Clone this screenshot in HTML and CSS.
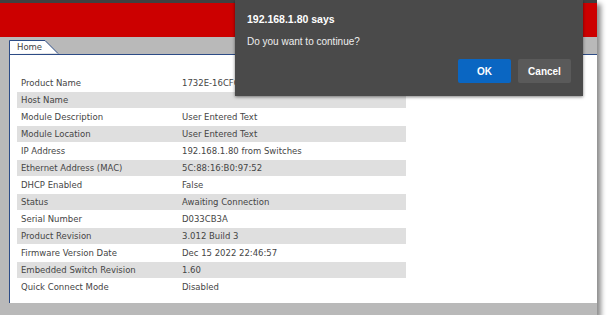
FILE: index.html
```html
<!DOCTYPE html>
<html>

<head>
  <title>Home</title>
  <link rel="stylesheet" href="styles.css">
</head>

<body>
  <div class="shot">
    <div class="topline"></div>
    <div class="header"></div>
    <div class="tabbar">
      <div class="tab">
        <svg class="tab-shape" width="50" height="14" viewBox="0 0 50 14">
          <path d="M0.5 14 V0.5 H36 L49 13.5" fill="#fff" stroke="#2d4c86" stroke-width="1" />
        </svg>
        <span>Home</span>
      </div>
    </div>
    <div class="panel">
      <table class="info">
        <tr><td>Product Name</td><td>1732E-16CFGM12P5QCWR</td></tr>
        <tr><td>Host Name</td><td></td></tr>
        <tr><td>Module Description</td><td>User Entered Text</td></tr>
        <tr><td>Module Location</td><td>User Entered Text</td></tr>
        <tr><td>IP Address</td><td>192.168.1.80 from Switches</td></tr>
        <tr><td>Ethernet Address (MAC)</td><td>5C:88:16:B0:97:52</td></tr>
        <tr><td>DHCP Enabled</td><td>False</td></tr>
        <tr><td>Status</td><td>Awaiting Connection</td></tr>
        <tr><td>Serial Number</td><td>D033CB3A</td></tr>
        <tr><td>Product Revision</td><td>3.012 Build 3</td></tr>
        <tr><td>Firmware Version Date</td><td>Dec 15 2022 22:46:57</td></tr>
        <tr><td>Embedded Switch Revision</td><td>1.60</td></tr>
        <tr><td>Quick Connect Mode</td><td>Disabled</td></tr>
      </table>
    </div>

    <div class="dialog">
      <div class="dialog-title">192.168.1.80 says</div>
      <div class="dialog-msg">Do you want to continue?</div>
      <div class="dialog-buttons">
        <button class="btn btn-ok">OK</button>
        <button class="btn btn-cancel">Cancel</button>
      </div>
    </div>
  </div>
</body>

</html>
```

FILE: styles.css
```css
* {
  margin: 0;
  padding: 0;
  box-sizing: border-box;
}

body {
  background-color: #fff;
  font-family: "DejaVu Sans", Verdana, sans-serif;
}

.shot {
  position: relative;
  width: 597px;
  height: 315px;
  background-color: #b9b9b9;
  box-shadow: 4px 4px 5px rgba(0, 0, 0, 0.45);
  display: flex;
  flex-direction: column;
  overflow: visible;
}

.topline {
  height: 3px;
  background-color: #404040;
}

.header {
  height: 34px;
  background-color: #cc0000;
}

.tabbar {
  height: 17px;
  padding-left: 9px;
  display: flex;
  align-items: flex-end;
}

.tab {
  position: relative;
  width: 50px;
  height: 13px;
}

.tab-shape {
  position: absolute;
  left: 0;
  top: -1px;
}

.tab span {
  position: relative;
  display: block;
  padding-left: 8px;
  font-size: 8.5px;
  line-height: 13px;
  color: #444;
}

.panel {
  margin-left: 9px;
  height: 249px;
  background-color: #fff;
  border-top: 1px solid #2d4c86;
  border-left: 1px solid #2d4c86;
  padding: 19px 0 0 7px;
}

.info {
  width: 389px;
  border-collapse: separate;
  border-spacing: 0 1px;
  font-size: 8.5px;
  color: #454545;
}

.info td {
  height: 16px;
  padding: 0 4px;
  white-space: nowrap;
}

.info td:first-child {
  width: 161px;
}

.info tr:nth-child(even) td {
  background-color: #dfdfdf;
}

/* alert box */
.dialog {
  position: absolute;
  left: 235px;
  top: 0;
  width: 348px;
  height: 96px;
  background-color: #4a4a4a;
  box-shadow: 0 1px 3px rgba(0, 0, 0, 0.5);
  padding: 12px 12px 13px 12px;
  display: flex;
  flex-direction: column;
  font-family: "Segoe UI", "Liberation Sans", Arial, sans-serif;
  color: #fff;
}

.dialog-title {
  font-size: 10.5px;
  font-weight: bold;
  line-height: 14px;
}

.dialog-msg {
  margin-top: 9px;
  font-size: 10px;
  line-height: 14px;
  color: #eee;
}

.dialog-buttons {
  margin-top: auto;
  display: flex;
  justify-content: flex-end;
  gap: 7px;
}

.btn {
  width: 53px;
  height: 24px;
  border: none;
  border-radius: 2px;
  color: #fff;
  font-family: inherit;
  font-size: 10px;
  font-weight: bold;
}

.btn-ok {
  background-color: #0a66c2;
}

.btn-cancel {
  background-color: #5a5a5a;
}
```
